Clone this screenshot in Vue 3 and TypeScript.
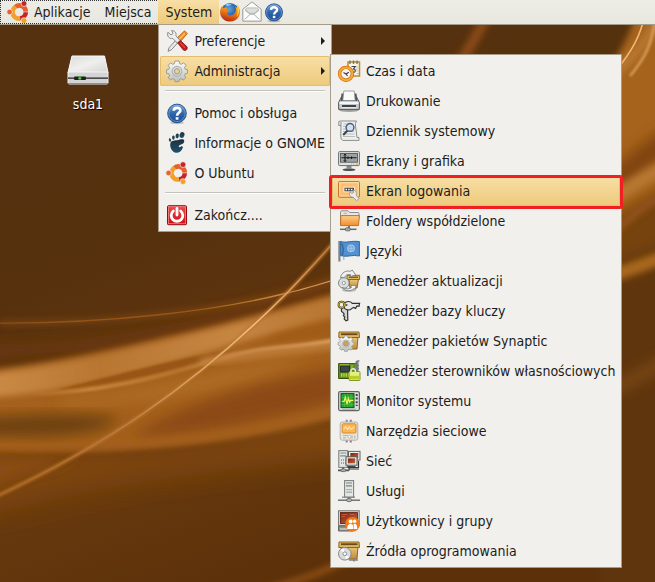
<script setup lang="ts">
import { ref } from 'vue'

interface Entry {
  id: string
  label: string
  icon: string
  submenu?: boolean
}

const systemGroups: Entry[][] = [
  [
    { id: 'preferences', label: 'Preferencje', icon: 'tools', submenu: true },
    { id: 'administration', label: 'Administracja', icon: 'gear', submenu: true },
  ],
  [
    { id: 'help', label: 'Pomoc i obsługa', icon: 'help' },
    { id: 'gnome', label: 'Informacje o GNOME', icon: 'gnome' },
    { id: 'ubuntu', label: 'O Ubuntu', icon: 'ubuntu' },
  ],
  [{ id: 'quit', label: 'Zakończ....', icon: 'power' }],
]

const adminEntries: Entry[] = [
  { id: 'time', label: 'Czas i data', icon: 'clock' },
  { id: 'print', label: 'Drukowanie', icon: 'printer' },
  { id: 'log', label: 'Dziennik systemowy', icon: 'log' },
  { id: 'screens', label: 'Ekrany i grafika', icon: 'display' },
  { id: 'login', label: 'Ekran logowania', icon: 'login' },
  { id: 'shares', label: 'Foldery współdzielone', icon: 'folder' },
  { id: 'lang', label: 'Języki', icon: 'flag' },
  { id: 'updates', label: 'Menedżer aktualizacji', icon: 'update' },
  { id: 'keys', label: 'Menedżer bazy kluczy', icon: 'keys' },
  { id: 'synaptic', label: 'Menedżer pakietów Synaptic', icon: 'synaptic' },
  { id: 'drivers', label: 'Menedżer sterowników własnościowych', icon: 'driver' },
  { id: 'monitor', label: 'Monitor systemu', icon: 'monitor' },
  { id: 'nettools', label: 'Narzędzia sieciowe', icon: 'nettools' },
  { id: 'network', label: 'Sieć', icon: 'network' },
  { id: 'services', label: 'Usługi', icon: 'server' },
  { id: 'users', label: 'Użytkownicy i grupy', icon: 'users' },
  { id: 'sources', label: 'Źródła oprogramowania', icon: 'sources' },
]

const systemOpen = ref(true)
const openEntry = ref('administration')
const marked = ref('login')
</script>

<template>
  <div class="desktop">
    <svg class="wallpaper" viewBox="0 0 655 582" preserveAspectRatio="none" aria-hidden="true">
      <defs>
        <linearGradient id="wp-base" x1="0" y1="0" x2="0.4" y2="1">
          <stop offset="0" stop-color="#553111" />
          <stop offset="0.45" stop-color="#57310e" />
          <stop offset="0.8" stop-color="#66380d" />
          <stop offset="1" stop-color="#5c310a" />
        </linearGradient>
        <linearGradient id="wp-arc" x1="0" y1="0" x2="331" y2="0" gradientUnits="userSpaceOnUse">
          <stop offset="0" stop-color="#8a4f16" />
          <stop offset="0.6" stop-color="#9a5818" />
          <stop offset="1" stop-color="#e0a45c" />
        </linearGradient>
        <linearGradient id="wp-line" x1="0" y1="495" x2="331" y2="245" gradientUnits="userSpaceOnUse">
          <stop offset="0" stop-color="#a9631d" />
          <stop offset="0.35" stop-color="#c08040" />
          <stop offset="0.75" stop-color="#f3bf80" />
          <stop offset="1" stop-color="#bd7630" />
        </linearGradient>
        <linearGradient id="wp-band" x1="0" y1="0" x2="331" y2="0" gradientUnits="userSpaceOnUse">
          <stop offset="0" stop-color="#c98945" />
          <stop offset="0.3" stop-color="#b87632" />
          <stop offset="0.7" stop-color="#c68642" />
          <stop offset="1" stop-color="#b87632" />
        </linearGradient>
        <linearGradient id="wp-streak" x1="30" y1="0" x2="331" y2="0" gradientUnits="userSpaceOnUse">
          <stop offset="0" stop-color="#c88642" stop-opacity="0" />
          <stop offset="0.2" stop-color="#c88642" />
          <stop offset="0.5" stop-color="#b57430" />
          <stop offset="1" stop-color="#e0a163" />
        </linearGradient>
        <filter id="b1" x="-20%" y="-20%" width="140%" height="140%"><feGaussianBlur stdDeviation="1" /></filter>
        <filter id="b3" x="-20%" y="-20%" width="140%" height="140%"><feGaussianBlur stdDeviation="3" /></filter>
        <filter id="b7" x="-20%" y="-30%" width="140%" height="160%"><feGaussianBlur stdDeviation="7" /></filter>
        <filter id="b14" x="-20%" y="-40%" width="140%" height="180%"><feGaussianBlur stdDeviation="13" /></filter>
      </defs>
      <rect width="655" height="582" fill="url(#wp-base)" />
      <path d="M-30 345C100 345 230 320 360 265L380 330L-30 360Z" fill="#6a390c" filter="url(#b7)" />
      <path d="M-30 420C120 470 240 440 360 400V455C240 470 130 475 -30 520Z" fill="#7d4510" filter="url(#b14)" />
      <path d="M-30 371C40 366 110 350 180 334S290 306 360 288V410C250 442 150 455 -30 448Z" fill="#a4611a" filter="url(#b3)" />
      <path d="M-30 376C50 368 110 353 180 337S290 308 360 290V312C290 326 210 352 140 371C90 384 40 396 -30 398Z" fill="url(#wp-band)" filter="url(#b3)" />
      <path d="M60 389C120 374 200 353 235 350C180 368 130 382 60 390Z" fill="#985512" filter="url(#b1)" />
      <path d="M270 338C300 328 320 324 350 320V331C310 338 290 340 270 342Z" fill="#a05b16" filter="url(#b3)" />
      <path d="M20 395C100 393 160 377 215 360S300 350 350 337" fill="none" stroke="url(#wp-streak)" stroke-width="4" filter="url(#b1)" />
      <path d="M200 362C260 353 300 350 350 342" fill="none" stroke="#c98846" stroke-width="9" opacity="0.7" filter="url(#b3)" />
      <path d="M60 400C140 396 220 372 310 358C250 384 170 400 60 406Z" fill="#b27129" filter="url(#b7)" />
      <path d="M-20 418C50 412 90 414 120 418C100 436 60 438 -20 436Z" fill="#6c410f" filter="url(#b7)" />
      <path d="M130 437C190 398 270 380 350 365V398C280 418 190 436 130 437Z" fill="#8b4a12" filter="url(#b7)" />
      <path d="M-20 447C110 452 230 442 350 407" fill="none" stroke="#a35f1a" stroke-width="6" filter="url(#b3)" />
      <path d="M-20 462C30 458 50 460 80 455L-20 486Z" fill="#8c4e12" filter="url(#b7)" />
      <path d="M0 323C110 324 220 310 287 293C305 289 318 285 340 278" fill="none" stroke="#8f5116" stroke-width="5" opacity="0.55" filter="url(#b3)" />
      <path d="M-5 323C110 324 220 310 287 293C305 289 318 285 340 278" fill="none" stroke="url(#wp-arc)" stroke-width="1.3" />
      <path d="M-5 497C100 448 190 390 287 293C310 269 325 253 345 229" fill="none" stroke="#b87330" stroke-width="4" opacity="0.7" filter="url(#b1)" />
      <path d="M-5 497C100 448 190 390 287 293C310 269 325 253 345 229" fill="none" stroke="url(#wp-line)" stroke-width="1.5" />
      <path d="M265 590C300 580 325 572 350 558" fill="none" stroke="#9a5517" stroke-width="5" filter="url(#b3)" />
      <path d="M490 10C478 34 470 48 455 70" fill="none" stroke="#8a4a15" stroke-width="10" filter="url(#b3)" />
      <path d="M640 0C632 40 600 90 560 120L560 280L680 180V0Z" fill="#a6641f" filter="url(#b3)" />
      <path d="M600 176C625 164 640 140 680 122V150C650 160 630 185 600 196Z" fill="#7e4311" filter="url(#b7)" />
      <path d="M600 204C625 194 640 178 680 160" fill="none" stroke="#b67731" stroke-width="14" filter="url(#b3)" />
      <path d="M600 225L680 180V240L600 268Z" fill="#764210" filter="url(#b7)" />
      <path d="M600 242C625 225 640 205 680 186" fill="none" stroke="#96531a" stroke-width="7" filter="url(#b3)" />
      <path d="M600 290L680 270V600H600Z" fill="#5f350c" filter="url(#b3)" />
      <path d="M600 278C630 272 640 264 680 252" fill="none" stroke="#a8671f" stroke-width="13" filter="url(#b3)" />
      <path d="M600 395C630 382 640 375 680 354" fill="none" stroke="#7d4913" stroke-width="11" filter="url(#b7)" />
      <path d="M600 85C632 60 645 45 657 20" fill="none" stroke="#b87730" stroke-width="9" filter="url(#b3)" />
      <path d="M645 15C640 36 633 50 615 72" fill="none" stroke="#efb676" stroke-width="1.6" />
      <path d="M655 20C652 44 645 58 630 76" fill="none" stroke="#d99c5c" stroke-width="2.5" filter="url(#b1)" />
    </svg>

    <svg class="sprite" width="0" height="0" aria-hidden="true">
      <defs>
        <linearGradient id="g-blue" x1="0" y1="0" x2="0" y2="1"><stop offset="0" stop-color="#79a4d8" /><stop offset="0.5" stop-color="#2f65ab" /><stop offset="1" stop-color="#1b4c92" /></linearGradient>
        <linearGradient id="g-metal" x1="0" y1="0" x2="0" y2="1"><stop offset="0" stop-color="#fdfdfc" /><stop offset="1" stop-color="#bcbfbb" /></linearGradient>
        <linearGradient id="g-orange" x1="0" y1="0" x2="0" y2="1"><stop offset="0" stop-color="#fdd08c" /><stop offset="1" stop-color="#f18d2c" /></linearGradient>
        <linearGradient id="g-red" x1="0" y1="0" x2="0" y2="1"><stop offset="0" stop-color="#e8504c" /><stop offset="1" stop-color="#d5070f" /></linearGradient>
        <linearGradient id="g-gold" x1="0" y1="0" x2="0" y2="1"><stop offset="0" stop-color="#eacb83" /><stop offset="1" stop-color="#c08a34" /></linearGradient>
        <linearGradient id="g-dark" x1="0" y1="0" x2="0" y2="1"><stop offset="0" stop-color="#20303c" /><stop offset="1" stop-color="#1d5270" /></linearGradient>
        <linearGradient id="g-screen" x1="0" y1="0" x2="1" y2="1"><stop offset="0" stop-color="#7c2113" /><stop offset="1" stop-color="#c4683a" /></linearGradient>
        <radialGradient id="g-fox" cx="0.45" cy="0.35" r="0.6"><stop offset="0" stop-color="#5aa6e4" /><stop offset="1" stop-color="#163a80" /></radialGradient>
        <linearGradient id="g-flame" x1="0.7" y1="0" x2="0.4" y2="1"><stop offset="0" stop-color="#fbc52b" /><stop offset="0.5" stop-color="#ec7a17" /><stop offset="1" stop-color="#b9280e" /></linearGradient>
      </defs>

      <symbol id="i-ubuntu" viewBox="0 0 24 24">
        <g fill="none" stroke-width="4.6">
          <path d="M9.6 6.8A6.3 6.3 0 0 0 14.4 18.3" stroke="#f2a02a" />
          <path d="M9.6 6.8A6.3 6.3 0 0 1 19.8 11.6" stroke="#e4602c" />
          <path d="M19.8 12.2A6.3 6.3 0 0 1 14.2 18.3" stroke="#cb2027" />
        </g>
        <g stroke="#f1efeb" stroke-width=".7">
          <circle cx="3.6" cy="12" r="2.8" fill="#e8622b" />
          <circle cx="18" cy="3.6" r="2.9" fill="#c8252b" />
          <circle cx="18" cy="20.6" r="2.9" fill="#f1a025" />
        </g>
      </symbol>

      <symbol id="i-firefox" viewBox="0 0 24 24">
        <circle cx="12" cy="11.7" r="9.6" fill="url(#g-fox)" />
        <path d="M19.5 3.6C24.9 9.5 23.6 17.5 17.8 21C11.5 24.4 3.9 21.4 1.8 15.7C.4 11.5 1.4 8 3.6 5C3.6 6.8 4.3 7.4 5 7.8C6.4 7 8 7 9.2 7.6C8.4 8.4 8.3 9.2 9 10C10 10.6 11 10.3 11.5 10.7C11 12.2 9 12 9 13.5C9.8 15.8 13.5 16.4 16 14.5C18.6 12.4 19.3 8.2 17.6 5.6C18.6 6.2 19.5 7 20 7.8Z" fill="url(#g-flame)" />
        <path d="M19.9 4.8C22.6 9 22.2 13.8 19.2 17.6C21 12.8 20.8 8.6 19.7 5.5Z" fill="#fde24b" />
        <path d="M7 4.3C9 2.7 12 2.8 14 4.1C12 4.5 10 6.2 8 5.5Z" fill="#8bc6ef" />
      </symbol>

      <symbol id="i-mail" viewBox="0 0 24 24">
        <path d="M2 9L11.2 1.6Q12 1 12.8 1.6L22 9V22H2Z" fill="#fbfbfa" stroke="#8d918d" />
        <path d="M4.5 9.5L6.5 7.5H17.5L19.5 9.5L14.5 13.5H9.5Z" fill="#dcdfdc" stroke="#a7aaa6" stroke-width=".8" />
        <path d="M4 20L10 14.5H14L20 20M4.5 10L10 14.5M19.5 10L14 14.5" fill="none" stroke="#a2a5a1" stroke-width=".9" />
      </symbol>

      <symbol id="i-help" viewBox="0 0 24 24">
        <ellipse cx="12" cy="21.8" rx="7" ry="1.4" fill="#0003" />
        <circle cx="12" cy="12.4" r="9.3" fill="url(#g-blue)" stroke="#1d4a88" stroke-width=".9" />
        <circle cx="12" cy="12.4" r="8.2" fill="none" stroke="#8fb3df" stroke-width=".8" opacity=".7" />
        <path d="M8.7 9.7C8.8 5.8 15.6 6 15.4 9.7C15.2 11.9 12.1 11.9 12.1 14.7" fill="none" stroke="#fff" stroke-width="2.6" />
        <rect x="10.7" y="16.2" width="2.8" height="2.5" fill="#fff" />
      </symbol>

      <symbol id="i-tools" viewBox="0 0 24 24">
        <path d="M19.6 1.8L22.3 4.6L13.8 14.4L10 10.9Z" fill="#f58a1e" stroke="#b85a0c" stroke-width=".8" />
        <path d="M19.8 4.2L12.6 11.8" stroke="#fdc26a" stroke-width="1.3" />
        <path d="M10.4 11.6L12.8 13.8L6.4 20.8L3 22.4L4 18.8Z" fill="#e8e9e7" stroke="#7e817e" stroke-width=".9" />
        <path d="M2.9 3.2L6 6L8 4.4L6.6 1.7C9.9 1.3 11.7 4 10.9 6.8L15.4 11.8L12.6 14.4L7.8 9.4C4.6 10.2 1.6 7.4 2.9 3.2Z" fill="#eceded" stroke="#7e817e" stroke-width=".9" />
        <path d="M12.6 13.8L15.4 11.5L21.8 17.6C23.2 20 20.8 22.6 18.4 21.1Z" fill="#c81d1d" stroke="#7f0e0e" stroke-width=".8" />
        <path d="M15.2 13.8L20 18.6" stroke="#ec6a62" />
      </symbol>

      <symbol id="i-cog" viewBox="0 0 24 24">
        <path d="M10 2H14L14.6 4.6L16.3 5.3L18.6 3.8L21 6.3L19.6 8.6L20.2 10.2L22.5 10.8V14.2L20.2 14.9L19.5 16.4L20.8 18.8L18.3 21L16 19.7L14.6 20.3L14 22.6H10L9.4 20.3L7.8 19.7L5.6 21L3.2 18.7L4.5 16.4L3.8 14.8L1.5 14.2V10.8L3.8 10.2L4.5 8.6L3.2 6.3L5.6 3.9L7.8 5.3L9.4 4.6Z" fill="url(#g-metal)" stroke="#9a9c97" />
        <circle cx="12" cy="12.3" r="4.8" fill="none" stroke="#b4b6b1" stroke-width="1.3" />
      </symbol>
      <symbol id="i-gear" viewBox="0 0 24 24">
        <use href="#i-cog" width="24" height="24" />
        <circle cx="12" cy="12.3" r="2.6" fill="#e9d398" stroke="#8d8f8b" stroke-width=".9" />
      </symbol>

      <symbol id="i-gnome" viewBox="0 0 24 24">
        <g fill="url(#g-dark)">
          <path d="M19.2 9.6C19.6 13.2 16.5 13.2 14.2 14.4C12.8 15.6 14.6 16.9 15.8 15.6C17.2 14.6 18.4 15.4 17.6 17.3C16.3 20.6 13.6 22 11.2 21.8C7 21.3 5.2 16.8 5.2 13.8C5.2 9.6 8.8 9.3 12 9.2C15 9 18.6 7.2 19.2 9.6Z" />
          <ellipse cx="17" cy="4" rx="2.4" ry="3" transform="rotate(20 17 4)" />
          <ellipse cx="12.2" cy="4.9" rx="1.6" ry="2.5" transform="rotate(10 12.2 4.9)" />
          <ellipse cx="8.4" cy="6.7" rx="1.3" ry="2.1" />
          <ellipse cx="5" cy="9" rx="1.1" ry="1.9" transform="rotate(-15 5 9)" />
        </g>
      </symbol>

      <symbol id="i-power" viewBox="0 0 24 24">
        <rect x="2.5" y="2.7" width="19" height="19" rx="1" fill="url(#g-red)" stroke="#990a10" />
        <rect x="3.5" y="3.7" width="17" height="17" fill="none" stroke="#f08a86" stroke-width=".8" />
        <path d="M8.3 8A5.8 5.8 0 1 0 15.7 8" fill="none" stroke="#fff" stroke-width="2.8" stroke-linecap="round" />
        <path d="M12 5.4V12" stroke="#fff" stroke-width="2.8" stroke-linecap="round" />
      </symbol>

      <symbol id="i-clock" viewBox="0 0 24 24">
        <rect x="11" y="3" width="11.5" height="14" fill="#f7f4ea" stroke="#b98d2c" stroke-width="1.5" />
        <path d="M13 1.5V5M16.5 1.5V5M20 1.5V5" stroke="#73756f" stroke-width="1.4" />
        <path d="M14.5 7.5H18.2L16.5 9.8Q19 10.4 18 12.6Q17 14 14.5 13" fill="none" stroke="#44443f" stroke-width="1.2" />
        <path d="M19.5 14.5H22M20 6.5V13" stroke="#c9c5b5" />
        <circle cx="9" cy="14.8" r="6.4" fill="#f3f3f1" stroke="#c9700b" stroke-width="3.4" />
        <circle cx="9" cy="14.8" r="6.4" fill="none" stroke="#f9a83a" stroke-width="2" />
        <path d="M6.5 13.6L9 15L11.8 13.2M9 15L10.5 17" fill="none" stroke="#3b3d40" stroke-width="1.1" />
      </symbol>

      <symbol id="i-printer" viewBox="0 0 24 24">
        <ellipse cx="12" cy="21.3" rx="10" ry="1.6" fill="#0005" />
        <path d="M4.4 8H19.6L22.4 13.5V20.4H1.6V13.5Z" fill="#c4c8ca" stroke="#55595c" />
        <path d="M4.5 4.5H19.5L20.4 12H3.6Z" fill="#4d565c" />
        <path d="M6.8 2H17.2L18.2 11.5H5.8Z" fill="#fafafa" stroke="#8c8f8f" stroke-width=".8" />
        <path d="M2.5 13H21.5V15H2.5Z" fill="#f5f6f6" />
        <path d="M5 16H19V18H5Z" fill="#3d4347" />
        <path d="M4.5 18.8H19.5" stroke="#f3f3f3" />
      </symbol>

      <symbol id="i-log" viewBox="0 0 24 24">
        <path d="M3.5 2H19.5Q17.8 4 18.5 7L20 18.5H22V21.4H6Q3.6 21 3.8 17L4 6.5H1.8V2.5Z" fill="#eef0ee" stroke="#8a8e8c" />
        <path d="M1.8 6.5H4L4 3" fill="none" stroke="#8a8e8c" />
        <path d="M6.5 5H16.5M6 7.5H16.5M6 10H17M6 12.5H17M6 15H17.5M6 17.5H18" stroke="#b8bcba" />
        <path d="M10.8 11.3L6.2 16" stroke="#3c4247" stroke-width="2" />
        <circle cx="13" cy="8.4" r="3.9" fill="#cfe0ef" stroke="#4a5a78" stroke-width="1.4" />
      </symbol>

      <symbol id="i-display" viewBox="0 0 24 24">
        <ellipse cx="12" cy="20.7" rx="6.5" ry="1.4" fill="#4d5254" />
        <path d="M9.5 16H14.5V20H9.5Z" fill="#878b8c" />
        <rect x="1.6" y="2.6" width="20.8" height="14" rx="1" fill="#dfe1df" stroke="#6c706f" />
        <rect x="3.5" y="4.4" width="17" height="8.8" fill="#9da3a2" stroke="#4a4f4f" stroke-width=".8" />
        <path d="M4.5 8.7H19.5M8 5V12.5M14.5 7.4V10M11 7.4V10" stroke="#14181a" stroke-width="1.1" />
        <path d="M6.8 6.4L8 5L9.2 6.4M6.8 11.2L8 12.6L9.2 11.2" fill="none" stroke="#14181a" stroke-width=".9" />
        <path d="M14 15H18" stroke="#eda43b" stroke-dasharray="1 1" />
        <rect x="19" y="14.4" width="1.8" height="1.4" fill="#f3a533" />
      </symbol>

      <symbol id="i-login" viewBox="0 0 24 24">
        <rect x="1.6" y="2.6" width="20.8" height="15.6" rx=".8" fill="url(#g-orange)" stroke="#c76a1c" />
        <rect x="2.7" y="3.7" width="18.6" height="13.4" fill="#fbbf73" stroke="#fde0b2" />
        <rect x="7" y="8.2" width="10.6" height="4.6" fill="#45474a" stroke="#fff" stroke-width=".8" />
        <path d="M8.5 10.5H16" stroke="#fff" stroke-width="1.5" stroke-dasharray="1.5 1.2" />
        <path d="M12.8 12.6L14.6 14.6L16.8 13.4L16 11.3C19.4 11.1 20 14 19 16L22 19.6L19.6 21.7L16.3 18.2C13.4 18.5 11.4 15.5 12.8 12.6Z" fill="#eceeec" stroke="#8d908e" stroke-width=".8" />
      </symbol>

      <symbol id="i-folder" viewBox="0 0 24 24">
        <path d="M3.5 16V3.2Q3.6 1.8 5 1.8H11L12.6 3.5H21Q22 3.5 22 4.6V8" fill="#e7e8e6" stroke="#8d8f8c" />
        <path d="M6.5 4.3H10" stroke="#f09a3f" />
        <path d="M3.8 7.5Q3.8 6.6 4.8 6.6H22.5L21.4 16.6H3.5Z" fill="url(#g-orange)" stroke="#c3701f" />
        <path d="M12 17V20" stroke="#777b7a" stroke-width="2" />
        <path d="M3 20.3H19.5" stroke="#666a69" stroke-width="1.5" />
        <rect x="8.4" y="18.8" width="4.8" height="3" rx="1" fill="#a9adab" stroke="#565a59" stroke-width=".8" />
      </symbol>

      <symbol id="i-flag" viewBox="0 0 24 24">
        <path d="M2.4 2V22.5" stroke="#7d868c" stroke-width="2.2" />
        <path d="M6.8 11V21" stroke="#a9b1b6" stroke-width="1.2" />
        <path d="M3.6 2.4C9 4.4 14 1.4 22.4 2.6V17C15 15.2 10.5 18.6 3.6 16.6Z" fill="#5390cf" stroke="#3266a5" />
        <path d="M4.5 4.4Q6 6 6.2 10T5 16" fill="none" stroke="#34659f" stroke-width="1.4" />
        <circle cx="14" cy="9.3" r="3.3" fill="#75a8dd" stroke="#a9cbed" stroke-width="1.1" />
        <path d="M12 9.3H16M14 7V11.6" stroke="#a9cbed" stroke-width=".8" />
      </symbol>

      <symbol id="i-crate" viewBox="0 0 24 24">
        <path d="M4 7H21L20 20H5Z" fill="url(#g-gold)" stroke="#906521" />
        <path d="M2 3H22L22.5 8.5H1.8Z" fill="#ddb663" stroke="#906521" />
        <path d="M4 5.2H20.5" stroke="#6b4a1a" stroke-width="1.8" />
        <path d="M9 8.5V13H12" fill="none" stroke="#a9772a" stroke-width="1.5" />
      </symbol>

      <symbol id="i-update" viewBox="0 0 24 24">
        <ellipse cx="12" cy="21.3" rx="7" ry="1.7" fill="#0003" />
        <path d="M12 10H21.5L20 19H13Z" fill="url(#g-gold)" stroke="#906521" />
        <path d="M10 6.3H22.6V10.5H10Z" fill="#e0b65e" stroke="#906521" />
        <path d="M12 8.2H21" stroke="#6b4a1a" stroke-width="1.2" />
        <path d="M3.5 8.5C4.5 3.5 9 1.2 13.5 2.3L15.2 1L18.7 5.8L13 7.8L13.6 5.6C10.5 5 8.5 6 7.5 8.5Z" fill="#f0f2f1" stroke="#7a7f7e" stroke-width=".9" />
        <circle cx="6.8" cy="14" r="5.3" fill="#dddfde" stroke="#858988" />
        <circle cx="6.8" cy="14" r="1.6" fill="#fff" stroke="#8d9190" stroke-width=".9" />
        <path d="M5 18.3C9 20.5 12.5 20.2 14.5 18.4L13.3 16.5L19 16.2L18.4 20.3L17 19.6C13.5 23 7.4 22.2 5 18.3Z" fill="#f3f4f4" stroke="#7a7f7e" stroke-width=".9" />
      </symbol>

      <symbol id="i-keys" viewBox="0 0 24 24">
        <path d="M6.5 8C9.5 7.5 11.6 9.5 10.6 12.6L10.8 21L9 21.8L7.2 19.8L7.8 18L6.4 16.6L7.2 15L5.8 13.4C3.7 12.5 3.7 9.5 6.5 8Z" fill="#d3d5d2" stroke="#30332f" stroke-width="1.2" />
        <path d="M7 4.4C10 1.5 14 2.2 15.3 4.4L22.6 4.4L22 7.3L20 7L18.6 9.4L16.6 8.4L14.6 9.6C12.5 12 8.4 11 7 8.5Z" fill="#e6e8e5" stroke="#30332f" stroke-width="1.2" />
        <circle cx="4.6" cy="5.7" r="3" fill="none" stroke="#463f16" stroke-width="2" />
        <circle cx="4.6" cy="5.7" r="3" fill="none" stroke="#d8c23c" stroke-width="1" />
        <circle cx="9.6" cy="6" r="1" fill="#555" />
      </symbol>

      <symbol id="i-synaptic" viewBox="0 0 24 24">
        <use href="#i-crate" width="24" height="24" />
        <use href="#i-cog" x="0" y="5.4" width="18" height="18" />
        <circle cx="9" cy="14.6" r="2.4" fill="#d5a44a" stroke="#8d8f8b" stroke-width=".8" />
      </symbol>

      <symbol id="i-driver" viewBox="0 0 24 24">
        <path d="M1.6 4.6H20V19.5H1.6Z" fill="#64911c" stroke="#36530a" />
        <rect x="3.6" y="7" width="9" height="6" fill="#3b474f" stroke="#1b2226" stroke-width=".8" />
        <path d="M4 16H13" stroke="#b9d74d" stroke-width="3.5" stroke-dasharray="1.3 1" />
        <path d="M15 6V11M3 5.8H12" stroke="#a2c53c" />
        <path d="M19 13V5Q19 2 21 2H22.4M20.8 3V12M18 6.5H22M18 9.5H22" fill="none" stroke="#757b7c" stroke-width="1.4" />
        <rect x="12" y="12.5" width="11" height="9" rx=".8" fill="#e6ee84" stroke="#879423" />
        <path d="M14 13V11Q16 8.5 18.4 11V13" fill="none" stroke="#e9ebeb" stroke-width="1.4" />
        <path d="M13 18.6H22" stroke="#b5d02b" stroke-width="3.6" />
      </symbol>

      <symbol id="i-monitor" viewBox="0 0 24 24">
        <rect x="1.6" y="2.6" width="20.8" height="19" rx="1.5" fill="#dcdfdc" stroke="#5f6664" stroke-width="1.2" />
        <rect x="4" y="4.6" width="13" height="14" fill="#29a02a" stroke="#174f1b" />
        <path d="M4.5 8.3H17M4.5 12H17M4.5 15.6H17M7.5 5V18M10.8 5V18M14 5V18" stroke="#4cc148" stroke-width=".7" />
        <path d="M5 12.5H7L8.4 8.5L10 15.2L11.4 9.5L12.6 13L13.6 11.4H16.4" fill="none" stroke="#f1f35b" stroke-width="1.2" />
        <path d="M19.7 5V17" stroke="#3c4142" stroke-width="2" stroke-dasharray="2 1.6" />
        <path d="M5 20.2H19" stroke="#a3a7a4" />
      </symbol>

      <symbol id="i-nettools" viewBox="0 0 24 24">
        <path d="M9.7 .8V4M9.7 20V23.5" stroke="#7c8aa6" stroke-width="2" />
        <path d="M13.8 .8V4M13.8 20V23.5" stroke="#a9697b" stroke-width="2" />
        <rect x="3.2" y="3" width="17.6" height="18.2" rx="2" fill="#e6e4de" stroke="#b6b2a8" />
        <rect x="5.2" y="4.8" width="13.8" height="9.2" rx="1" fill="#ffb650" stroke="#d98a2a" />
        <path d="M6.5 10.5L8.6 7.7L10.5 10.2L12.5 8L14.2 10.4L17.4 7.6" fill="none" stroke="#ffe3b0" stroke-width="1.2" />
        <path d="M6 16.5H11M6 18.8H9M15 16.4V19.5M17.8 16.4V19.5" stroke="#bcb8ae" stroke-width="1.2" />
        <circle cx="12.6" cy="17.8" r="1.5" fill="#f7f6f3" stroke="#b4b0a5" stroke-width=".8" />
      </symbol>

      <symbol id="i-network" viewBox="0 0 24 24">
        <path d="M12 21.5V18.5H21.5V12M12 20H22" fill="none" stroke="#333736" stroke-width="1.2" />
        <rect x="11.5" y="2.4" width="11.5" height="8.6" fill="#f1f1ef" stroke="#60645f" />
        <rect x="13.3" y="4" width="8" height="5.4" fill="url(#g-screen)" />
        <rect x="1.8" y="1.6" width="8.6" height="16.8" fill="#e3e6e4" stroke="#767b79" />
        <path d="M3.2 4H9M3.2 6.8H9" stroke="#868b89" stroke-width="1.2" />
        <path d="M4 11H9M4 14H9" stroke="#868b89" stroke-width="1.4" stroke-dasharray="1 1" />
        <rect x="9" y="7.8" width="11" height="8.4" fill="#f3f3f1" stroke="#50544f" />
        <rect x="10.8" y="9.4" width="7.4" height="5" fill="url(#g-screen)" />
        <path d="M10.5 18H18.5" stroke="#323635" stroke-width="1.8" />
        <path d="M1 21.3H12M6 18.5V21" stroke="#555958" stroke-width="1.7" />
        <rect x="4" y="20" width="4.6" height="2.6" rx="1" fill="#b3b8b5" stroke="#555958" stroke-width=".8" />
      </symbol>

      <symbol id="i-server" viewBox="0 0 24 24">
        <path d="M5 18.2H18" stroke="#8f9391" stroke-width="1.4" />
        <rect x="7.6" y="1.6" width="9" height="16.4" fill="#e3e6e4" stroke="#767b79" />
        <path d="M9 4H15M9 6.8H15" stroke="#7a807d" stroke-width="1.2" />
        <path d="M9.6 10.6H15M9.6 13.3H15" stroke="#7a807d" stroke-width="1.4" stroke-dasharray="1 1" />
        <path d="M12 18V21" stroke="#7d8280" stroke-width="1.8" />
        <path d="M1 21.2H23" stroke="#666b69" stroke-width="1.4" />
        <rect x="9.8" y="19.6" width="4.6" height="3" rx="1.2" fill="#b7bcb9" stroke="#555958" stroke-width=".8" />
      </symbol>

      <symbol id="i-users" viewBox="0 0 24 24">
        <path d="M1.5 17H16V22H1.5Z" fill="#8c8f8d" stroke="#646664" />
        <path d="M3 20H12" stroke="#ececea" />
        <rect x="1.6" y="1.8" width="20.6" height="14.6" fill="#e0dfdc" stroke="#6e6f6c" />
        <rect x="3.4" y="3.6" width="17" height="10.8" fill="url(#g-screen)" stroke="#541509" stroke-width=".8" />
        <path d="M4.5 5.5H10M4.5 7.5H8M13 5.5H17" stroke="#d2643f" stroke-width=".8" />
        <circle cx="15.5" cy="15.3" r="7.4" fill="#f27a17" />
        <g fill="#fff">
          <circle cx="13.6" cy="12.6" r="2" /><path d="M10.2 20Q10.2 15 13.6 15T16 20Z" />
          <circle cx="17.6" cy="12.3" r="1.8" /><path d="M16.6 20V15Q20.2 13.8 20.3 20Z" />
        </g>
      </symbol>

      <symbol id="i-sources" viewBox="0 0 24 24">
        <use href="#i-crate" width="24" height="24" />
        <path d="M12 21H21M17 19V22.5" stroke="#7f8382" stroke-width="1.7" />
        <circle cx="7.8" cy="14.8" r="6.3" fill="#dcdedd" stroke="#858988" />
        <path d="M7.8 14.8L3.5 11L6.5 9.3ZM7.8 14.8L12 18.6L9 20.3Z" fill="#fff" />
        <circle cx="7.8" cy="14.8" r="1.9" fill="#fff" stroke="#8d9190" />
      </symbol>
    </svg>

    <header class="panel">
      <ul class="menubar">
        <li>
          <button type="button" class="top apps">
            <svg class="icon" aria-hidden="true"><use href="#i-ubuntu" /></svg>
            Aplikacje
          </button>
        </li>
        <li><button type="button" class="top">Miejsca</button></li>
        <li class="anchor">
          <button type="button" class="top" :class="{ active: systemOpen }" :aria-expanded="systemOpen" @click="systemOpen = !systemOpen">System</button>
          <div v-if="systemOpen" class="menu system-menu">
            <ul v-for="(group, g) in systemGroups" :key="g" class="group">
              <li v-for="entry in group" :key="entry.id" class="anchor">
                <button
                  type="button"
                  class="entry"
                  :class="{ active: openEntry === entry.id }"
                  @click="openEntry = entry.id"
                >
                  <svg class="icon" aria-hidden="true"><use :href="'#i-' + entry.icon" /></svg>
                  <span>{{ entry.label }}</span>
                  <i v-if="entry.submenu" class="arrow"></i>
                </button>
                <ul v-if="entry.id === 'administration' && openEntry === entry.id" class="menu submenu">
                  <li v-for="sub in adminEntries" :key="sub.id" class="anchor" :class="{ marked: marked === sub.id }">
                    <button type="button" class="entry" :class="{ active: marked === sub.id }" @click="marked = sub.id">
                      <svg class="icon" aria-hidden="true"><use :href="'#i-' + sub.icon" /></svg>
                      <span>{{ sub.label }}</span>
                    </button>
                  </li>
                </ul>
              </li>
            </ul>
          </div>
        </li>
      </ul>
      <div class="launchers">
        <button type="button" aria-label="Firefox"><svg aria-hidden="true"><use href="#i-firefox" /></svg></button>
        <button type="button" aria-label="Poczta"><svg aria-hidden="true"><use href="#i-mail" /></svg></button>
        <button type="button" aria-label="Pomoc"><svg aria-hidden="true"><use href="#i-help" /></svg></button>
      </div>
    </header>

    <main class="surface">
      <button type="button" class="drive">
        <svg viewBox="0 0 44 32" aria-hidden="true">
          <defs>
            <linearGradient id="d-top" x1="0" y1="0" x2="1" y2="1"><stop offset="0" stop-color="#dcdcdb" /><stop offset="0.5" stop-color="#efefee" /><stop offset="1" stop-color="#d4d4d3" /></linearGradient>
          </defs>
          <path d="M1.5 19H42.5V31H1.5Z" fill="#0005" />
          <path d="M6 2H38.5L42 18.5H2Z" fill="url(#d-top)" stroke="#fafafa" />
          <path d="M2 18H42V29Q42 30 41 30H3Q2 30 2 29Z" fill="#d3d4d3" stroke="#f4f4f4" />
          <path d="M2 24.2H42" stroke="#202220" stroke-width="1.2" />
          <path d="M2 29.5H42" stroke="#8e908e" />
          <rect x="8" y="22.5" width="12" height="3.4" rx="1" fill="#1c211c" />
          <circle cx="13.8" cy="24.2" r="1.5" fill="#4fc535" />
        </svg>
        <span>sda1</span>
      </button>
    </main>
  </div>
</template>

<style>
body {
  margin: 0;
}
</style>

<style scoped>
.desktop {
  position: relative;
  display: flex;
  flex-direction: column;
  min-height: 100vh;
  overflow: hidden;
  background: #57310e;
  color: #1c1c1c;
  font: 14px/16px "DejaVu Sans Condensed", "DejaVu Sans", sans-serif;
}

.wallpaper {
  position: absolute;
  inset: 0;
  width: 100%;
  height: 100%;
}

.sprite {
  position: absolute;
}

ul {
  margin: 0;
  padding: 0;
  list-style: none;
}

button {
  margin: 0;
  padding: 0;
  border: 0;
  background: none;
  color: inherit;
  font: inherit;
  cursor: default;
}

.icon {
  flex: none;
  width: 24px;
  height: 24px;
}

.panel {
  position: relative;
  z-index: 1;
  display: flex;
  height: 24px;
  border-bottom: 1px solid #a39c8a;
  background: linear-gradient(#edece6, #e8e7df);
}

.menubar {
  display: flex;
  outline: 1px dotted #333;
  outline-offset: -1px;
}

.anchor {
  position: relative;
}

.top {
  display: flex;
  align-items: center;
  height: 24px;
  padding: 0 7px;
}

.apps {
  gap: 4px;
  padding-left: 6px;
}

.active {
  background: linear-gradient(#f8dfa6, #edca7c);
}

.launchers {
  display: flex;
}

.launchers button {
  width: 22px;
  height: 24px;
}

.launchers svg {
  display: block;
  width: 22px;
  height: 24px;
}

.menu {
  position: absolute;
  box-sizing: border-box;
  padding: 1px;
  border: 1px solid #a59c89;
  background: #f1f0ec;
  white-space: nowrap;
}

.system-menu {
  top: 24px;
  left: 0;
}

.submenu {
  top: -2px;
  left: 100%;
}

.group + .group::before {
  content: "";
  display: block;
  height: 1px;
  margin: 4px 5px 6px;
  border-bottom: 1px solid #fff;
  background: #c3c1bb;
}

.entry {
  display: flex;
  align-items: center;
  gap: 5px;
  width: 100%;
  height: 30px;
  padding: 0 5px;
  border-radius: 2px;
  text-align: left;
}

.entry.active {
  box-shadow: inset 0 0 0 1px #e3bd6c;
}

.arrow {
  margin-left: auto;
  border: solid transparent;
  border-width: 4px 0 4px 4px;
  border-left-color: #1c1c1c;
}

.marked::after {
  content: "";
  position: absolute;
  inset: -1px -3px -3px;
  border: 3px solid #ef1f23;
  border-radius: 3px;
  pointer-events: none;
}

.surface {
  position: relative;
  flex: 1;
  padding: 29px 58px;
}

.drive {
  display: flex;
  flex-direction: column;
  align-items: center;
  gap: 10px;
  width: 60px;
  color: #fff;
  text-shadow: 1px 1px 1px #000;
}

.drive svg {
  width: 44px;
  height: 32px;
}
</style>
